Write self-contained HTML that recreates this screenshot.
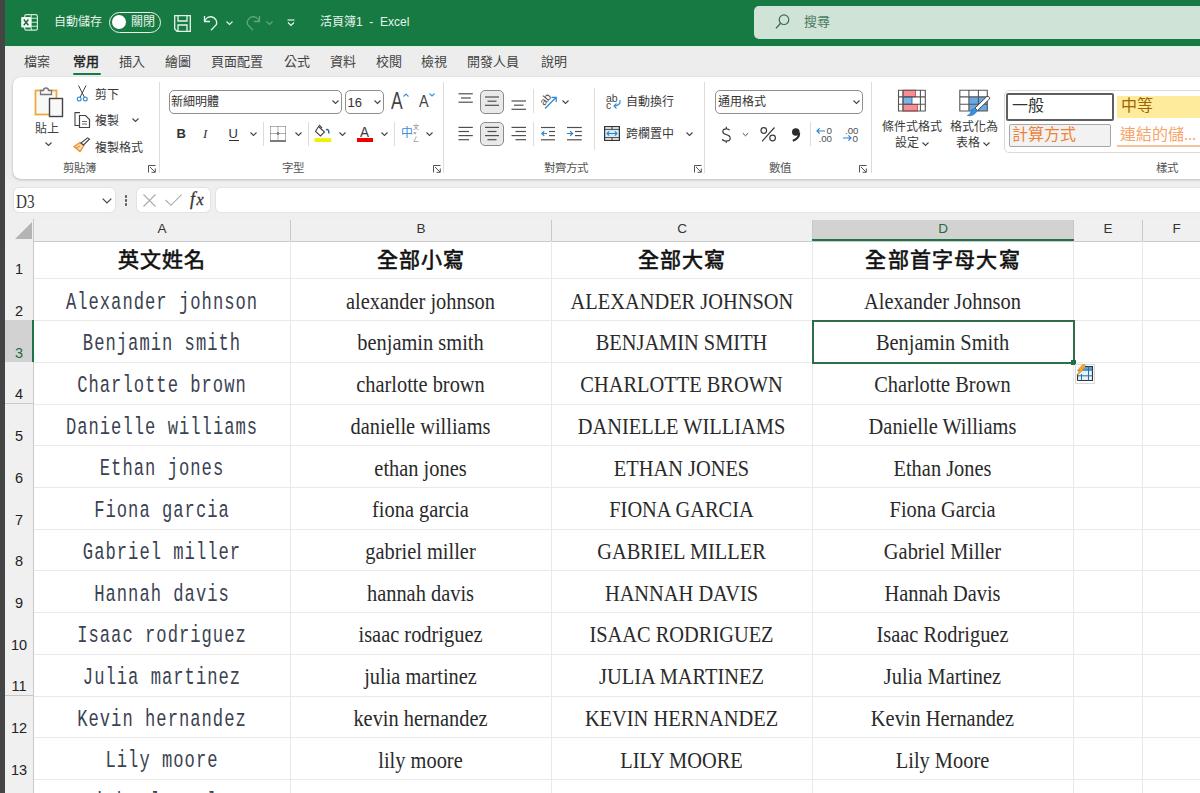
<!DOCTYPE html>
<html lang="zh-TW">
<head>
<meta charset="utf-8">
<style>
*{margin:0;padding:0;box-sizing:border-box}
html,body{width:1200px;height:793px;overflow:hidden}
body{position:relative;background:#efefef;font-family:"Liberation Sans",sans-serif;color:#262626}
.a{position:absolute;white-space:nowrap}
#strip{left:0;top:0;width:5px;height:793px;background:#444}
#title{left:5px;top:0;width:1195px;height:46.5px;background:#167a42}
#tabs{left:5px;top:46px;width:1195px;height:133px;background:#ededed;border-top:1.5px solid #ddf2e3}
#panel{left:13px;top:76.5px;width:1200px;height:102.5px;background:#fff;border-radius:8px;box-shadow:0 1px 3px rgba(0,0,0,.2),0 0 1px rgba(0,0,0,.12)}
.tab{font-size:13px;color:#444;top:52px;line-height:20px}
.lbl{font-size:11.5px;color:#555;line-height:14px}
.rt{font-size:12px;color:#3a3a3a;line-height:14px}
.sep{width:1px;background:#dcdcdc}
.chev{width:6px;height:6px}
svg{position:absolute;overflow:visible}
/* grid */
#fbar{left:5px;top:179px;width:1195px;height:41px;background:transparent}
.box{background:#fff;border-radius:5px;box-shadow:0 0 0 1px #e3e3e3}
#grid{left:5px;top:241px;width:1195px;height:552px;background:#fff}
.ch{top:219.5px;height:22.5px;background:#f0f0f0;border-right:1px solid #c8c8c8;border-bottom:1px solid #c8c8c8;font-size:13.5px;color:#333;text-align:center;line-height:17px}
.rh{left:5px;width:29px;background:#f0f0f0;border-right:1px solid #c8c8c8;border-bottom:1px solid #c8c8c8;font-size:14.5px;color:#222;text-align:center}
.hl{height:1px;background:#e9e9e9;left:33px;width:1167px}
.vl{width:1px;background:#e9e9e9;top:241px;height:552px}
.ca{font-family:"Liberation Mono",monospace;color:#3b4252;font-size:24.5px;line-height:24px}
.cs{font-family:"Liberation Serif",serif;color:#2a2a2a;font-size:24px;line-height:24px}
.hd{font-size:21px;font-weight:400;-webkit-text-stroke:0.6px #111;color:#111;text-align:center;line-height:24px;letter-spacing:1.2px;text-indent:1.2px}
.ca,.cs{height:0;overflow:visible}
.ca span,.cs span{position:absolute;left:0;right:0;bottom:0;display:block;text-align:center}
.ca span{transform:scaleX(0.7);bottom:-5px;letter-spacing:1.45px;text-indent:1.45px;left:-60px;right:-60px}
.cs span{transform:scaleX(0.85);bottom:-3.2px}
</style>
</head>
<body>
<div class="a" id="strip"></div>
<div class="a" id="title"></div>

<!-- title bar content -->
<svg style="left:0;top:0" width="1" height="1" viewBox="0 0 1 1">
 <rect x="24.7" y="14.6" width="12.7" height="15.6" rx="1.6" fill="none" stroke="#cdebd7" stroke-width="1.2"/>
 <path d="M31.2 14.6 V30.2 M24.7 18.2 H37.4 M24.7 22.3 H37.4 M24.7 26.2 H37.4" stroke="#cdebd7" stroke-width="1.1"/>
 <rect x="21.2" y="17.1" width="9.8" height="10.4" rx="0.8" fill="#f3fbf5"/>
 <path d="M23.8 19.6 L28.4 25.2 M28.4 19.6 L23.8 25.2" stroke="#1f6a3e" stroke-width="1.5"/>
</svg>
<div class="a" style="left:54px;top:14px;font-size:12px;line-height:16px;color:#e8f4ec">自動儲存</div>
<div class="a" style="left:108.5px;top:12px;width:52px;height:20.5px;border:1.4px solid #e8f4ec;border-radius:11px"></div>
<div class="a" style="left:112px;top:15px;width:14px;height:14px;border-radius:50%;background:#fff"></div>
<div class="a" style="left:131px;top:14px;font-size:12px;line-height:16px;color:#e8f4ec">關閉</div>
<svg style="left:174px;top:15px" width="17" height="17" viewBox="0 0 17 17">
 <path d="M0.7 0.7 H16.3 V16.3 H3 L0.7 14 Z" fill="none" stroke="#e8f4ec" stroke-width="1.3"/>
 <path d="M4 0.7 V6 H13 V0.7" fill="none" stroke="#e8f4ec" stroke-width="1.3"/>
 <path d="M4 16.3 V10 H13 V16.3" fill="none" stroke="#e8f4ec" stroke-width="1.3"/>
</svg>
<svg style="left:203px;top:15px" width="18" height="16" viewBox="0 0 18 16">
 <path d="M1.5 1 V6.5 H7" fill="none" stroke="#e8f4ec" stroke-width="1.3"/>
 <path d="M1.8 6.2 A6 6 0 1 1 13.5 9.5 L8 15.2" fill="none" stroke="#e8f4ec" stroke-width="1.3"/>
</svg>
<svg style="left:226px;top:21px" width="7" height="4" viewBox="0 0 7 4"><path d="M0.5 0.5 L3.5 3.5 L6.5 0.5" fill="none" stroke="#e8f4ec" stroke-width="1.2"/></svg>
<svg style="left:243px;top:15px" width="18" height="16" viewBox="0 0 18 16">
 <path d="M16.5 1 V6.5 H11" fill="none" stroke="#5fa77c" stroke-width="1.3"/>
 <path d="M16.2 6.2 A6 6 0 1 0 4.5 9.5 L10 15.2" fill="none" stroke="#5fa77c" stroke-width="1.3"/>
</svg>
<svg style="left:266px;top:21px" width="7" height="4" viewBox="0 0 7 4"><path d="M0.5 0.5 L3.5 3.5 L6.5 0.5" fill="none" stroke="#5fa77c" stroke-width="1.2"/></svg>
<svg style="left:287px;top:19px" width="8" height="8" viewBox="0 0 8 8">
 <line x1="0.5" y1="1" x2="7.5" y2="1" stroke="#e8f4ec" stroke-width="1.2"/>
 <path d="M1 3.5 L4 6.5 L7 3.5" fill="none" stroke="#e8f4ec" stroke-width="1.2"/>
</svg>
<div class="a" style="left:320px;top:14px;font-size:12px;line-height:16px;color:#e8f4ec">活頁簿1 &nbsp;- &nbsp;Excel</div>
<div class="a" style="left:754px;top:6px;width:460px;height:32.5px;background:#cfe3d6;border-radius:5px"></div>
<svg style="left:775px;top:14px" width="15" height="16" viewBox="0 0 15 16">
 <circle cx="9" cy="5.7" r="4.8" fill="none" stroke="#3c6b50" stroke-width="1.2"/>
 <line x1="5.6" y1="9.2" x2="1" y2="14.3" stroke="#3c6b50" stroke-width="1.3"/>
</svg>
<div class="a" style="left:804px;top:13px;font-size:13px;line-height:17px;color:#4a7a5e">搜尋</div>
<div class="a" id="tabs"></div>

<!-- tabs -->
<div class="a tab" style="left:24px">檔案</div>
<div class="a tab" style="left:73px;color:#222;-webkit-text-stroke:0.45px #222">常用</div>
<div class="a" style="left:73px;top:72.5px;width:28px;height:2.5px;border-radius:2px;background:#177a42"></div>
<div class="a tab" style="left:119px">插入</div>
<div class="a tab" style="left:165px">繪圖</div>
<div class="a tab" style="left:211px">頁面配置</div>
<div class="a tab" style="left:284px">公式</div>
<div class="a tab" style="left:330px">資料</div>
<div class="a tab" style="left:376px">校閱</div>
<div class="a tab" style="left:421px">檢視</div>
<div class="a tab" style="left:467px">開發人員</div>
<div class="a tab" style="left:541px">說明</div>
<div class="a" id="panel"></div>

<!-- ribbon: clipboard -->
<svg style="left:34px;top:85px" width="30" height="33" viewBox="0 0 30 33">
 <rect x="1.5" y="5.5" width="21" height="24" fill="#f8f8f8" stroke="#f0a93b" stroke-width="1.8"/>
 <path d="M6.5 9.5 V5.5 H9.5 A2.5 2.5 0 0 1 14.5 5.5 H17.5 V9.5 Z" fill="#f7f7f7" stroke="#777" stroke-width="1.3"/>
 <rect x="15.5" y="13.5" width="13" height="18" fill="#f8f8f8" stroke="#444" stroke-width="1.4"/>
</svg>
<div class="a rt" style="left:34.5px;top:121px;font-size:12px;line-height:16px;color:#444">貼上</div>
<svg style="left:45px;top:142px" width="7" height="4" viewBox="0 0 7 4"><path d="M0.5 0.5 L3.5 3.5 L6.5 0.5" fill="none" stroke="#444" stroke-width="1.1"/></svg>
<svg style="left:76px;top:85px" width="13" height="17" viewBox="0 0 13 17">
 <path d="M2.5 0.5 L8.5 12.5 M10 0.5 L4 12.5" stroke="#444" stroke-width="1"/>
 <circle cx="3.2" cy="14" r="1.9" fill="#fff" stroke="#3d8fd6" stroke-width="1.2"/>
 <circle cx="9.3" cy="14" r="1.9" fill="#fff" stroke="#3d8fd6" stroke-width="1.2"/>
</svg>
<div class="a rt" style="left:95px;top:87.5px">剪下</div>
<svg style="left:74px;top:112px" width="17" height="17" viewBox="0 0 17 17">
 <path d="M5 13.5 H1 V0.6 H6" fill="none" stroke="#444" stroke-width="1.1"/>
 <path d="M5.5 3.5 H11.5 L15.5 7.5 V15.5 H5.5 Z" fill="#fff" stroke="#444" stroke-width="1.2"/>
 <path d="M8 9.5 H13 M8 12 H13" stroke="#555" stroke-width="0.9"/>
</svg>
<div class="a rt" style="left:95px;top:114px">複製</div>
<svg style="left:132px;top:118px" width="7" height="4" viewBox="0 0 7 4"><path d="M0.5 0.5 L3.5 3.5 L6.5 0.5" fill="none" stroke="#444" stroke-width="1.1"/></svg>
<svg style="left:73px;top:137px" width="18" height="17" viewBox="0 0 18 17">
 <path d="M1 9.5 L7 14.5 L11 8.5 L7 5.5 Z" fill="#fbd9a4" stroke="#e8892c" stroke-width="1.2"/>
 <path d="M3 11 L7 9" stroke="#e8892c" stroke-width="1"/>
 <path d="M8 6 L10.5 8 L16.5 2 L14.5 0.8 Z" fill="#fff" stroke="#444" stroke-width="1.1"/>
</svg>
<div class="a rt" style="left:95px;top:140.5px">複製格式</div>
<div class="a lbl" style="left:62.5px;top:161px">剪貼簿</div>
<svg style="left:148px;top:165px" width="8" height="8" viewBox="0 0 8 8"><path d="M0.5 7.5 V0.5 H7.5 M2 2 L7 7 M3.5 7.3 H7.3 V3.5" fill="none" stroke="#555" stroke-width="1"/></svg>
<div class="a sep" style="left:159px;top:82px;height:91px"></div>

<!-- ribbon: font -->
<div class="a" style="left:168.5px;top:89.5px;width:173px;height:24px;border:1px solid #8f8f8f;border-radius:5px;background:#fff"></div>
<div class="a" style="left:171px;top:95px;font-size:12px;line-height:14px;color:#333">新細明體</div>
<svg style="left:332px;top:100px" width="7" height="4" viewBox="0 0 7 4"><path d="M0.5 0.5 L3.5 3.5 L6.5 0.5" fill="none" stroke="#444" stroke-width="1.1"/></svg>
<div class="a" style="left:345px;top:89.5px;width:38.5px;height:24px;border:1px solid #8f8f8f;border-radius:5px;background:#fff"></div>
<div class="a" style="left:347.5px;top:95px;font-size:13px;line-height:15px;color:#333">16</div>
<svg style="left:374px;top:100px" width="7" height="4" viewBox="0 0 7 4"><path d="M0.5 0.5 L3.5 3.5 L6.5 0.5" fill="none" stroke="#444" stroke-width="1.1"/></svg>
<div class="a" style="left:390.5px;top:88.5px;font-size:23px;line-height:24px;color:#444;transform:scaleX(0.76);transform-origin:0 0">A</div>
<svg style="left:403px;top:93px" width="6" height="4" viewBox="0 0 6 4"><path d="M0.5 3.5 L3 1 L5.5 3.5" fill="none" stroke="#3d8fd6" stroke-width="1.1"/></svg>
<div class="a" style="left:419px;top:93px;font-size:17px;line-height:18px;color:#444;transform:scaleX(0.85);transform-origin:0 0">A</div>
<svg style="left:429px;top:93px" width="6" height="4" viewBox="0 0 6 4"><path d="M0.5 0.5 L3 3 L5.5 0.5" fill="none" stroke="#3d8fd6" stroke-width="1.1"/></svg>
<div class="a" style="left:176.5px;top:126px;font-size:13px;line-height:15px;font-weight:bold;color:#333">B</div>
<div class="a" style="left:203px;top:126px;font-size:13px;line-height:15px;font-family:'Liberation Serif',serif;font-style:italic;color:#333">I</div>
<div class="a" style="left:228.5px;top:126px;font-size:13px;line-height:15px;color:#333">U</div>
<div class="a" style="left:228.5px;top:140px;width:10px;height:1px;background:#333"></div>
<svg style="left:249.5px;top:132px" width="7" height="4" viewBox="0 0 7 4"><path d="M0.5 0.5 L3.5 3.5 L6.5 0.5" fill="none" stroke="#444" stroke-width="1.1"/></svg>
<div class="a sep" style="left:263px;top:122px;height:24px"></div>
<svg style="left:270px;top:126px" width="16" height="16" viewBox="0 0 16 16">
 <path d="M0.5 0.5 H15.5 M0.5 0.5 V14.5 M15.5 0.5 V14.5 M8 0.5 V14.5 M0.5 7.5 H15.5" fill="none" stroke="#555" stroke-width="0.9" stroke-dasharray="1 1"/>
 <circle cx="8" cy="7.5" r="1" fill="none" stroke="#555" stroke-width="0.8"/>
 <line x1="0" y1="15" x2="16" y2="15" stroke="#333" stroke-width="1.3"/>
</svg>
<svg style="left:295px;top:132px" width="7" height="4" viewBox="0 0 7 4"><path d="M0.5 0.5 L3.5 3.5 L6.5 0.5" fill="none" stroke="#444" stroke-width="1.1"/></svg>
<div class="a sep" style="left:308px;top:122px;height:24px"></div>
<svg style="left:314px;top:124px" width="18" height="19" viewBox="0 0 18 19">
 <path d="M4.5 2.5 L10.5 8 L6.5 12 L1.5 7.5 Z" fill="#fff" stroke="#444" stroke-width="1.1"/>
 <path d="M5 1 L8 4" stroke="#444" stroke-width="1.1"/>
 <path d="M12 6 Q14 4.5 14.8 7.5 L14.8 9.5" fill="none" stroke="#1f5fa8" stroke-width="1.4"/>
 <rect x="0.5" y="14.2" width="16.8" height="3.8" fill="#f2f000"/>
</svg>
<svg style="left:339px;top:132px" width="7" height="4" viewBox="0 0 7 4"><path d="M0.5 0.5 L3.5 3.5 L6.5 0.5" fill="none" stroke="#444" stroke-width="1.1"/></svg>
<div class="a" style="left:359.5px;top:122.5px;font-size:15px;line-height:17px;color:#3a3a3a;transform:scaleX(0.9);transform-origin:0 0">A</div>
<div class="a" style="left:357px;top:138.2px;width:16px;height:3.8px;background:#ee0000"></div>
<svg style="left:381px;top:132px" width="7" height="4" viewBox="0 0 7 4"><path d="M0.5 0.5 L3.5 3.5 L6.5 0.5" fill="none" stroke="#444" stroke-width="1.1"/></svg>
<div class="a sep" style="left:394px;top:122px;height:24px"></div>
<div class="a" style="left:401px;top:126px;font-size:12px;line-height:14px;color:#3d8fd6">中</div>
<div class="a" style="left:413px;top:124px;font-size:6px;line-height:6px;color:#777">文<br>×<br>ㄥ</div>
<svg style="left:425.5px;top:132px" width="7" height="4" viewBox="0 0 7 4"><path d="M0.5 0.5 L3.5 3.5 L6.5 0.5" fill="none" stroke="#444" stroke-width="1.1"/></svg>
<div class="a lbl" style="left:282px;top:161px">字型</div>
<svg style="left:433px;top:165px" width="8" height="8" viewBox="0 0 8 8"><path d="M0.5 7.5 V0.5 H7.5 M2 2 L7 7 M3.5 7.3 H7.3 V3.5" fill="none" stroke="#555" stroke-width="1"/></svg>
<div class="a sep" style="left:443px;top:82px;height:91px"></div>

<!-- ribbon: alignment -->
<div class="a" style="left:480.2px;top:89.5px;width:23.8px;height:24px;border:1px solid #8a8a8a;border-radius:5px;background:#e9e9e9"></div>
<div class="a" style="left:480.2px;top:122px;width:23.8px;height:24.2px;border:1px solid #8a8a8a;border-radius:5px;background:#e9e9e9"></div>
<svg style="left:0;top:0" width="1" height="1" viewBox="0 0 1 1"><path d="M458.5 93.8 H472.8" stroke="#505050" stroke-width="1.2"/><path d="M461 98 H470.8" stroke="#505050" stroke-width="1.2"/><path d="M458.5 102.2 H472.8" stroke="#505050" stroke-width="1.2"/><path d="M485 97 H499" stroke="#505050" stroke-width="1.2"/><path d="M487.5 101.2 H496.5" stroke="#505050" stroke-width="1.2"/><path d="M485 105.3 H499" stroke="#505050" stroke-width="1.2"/><path d="M511.5 101 H526" stroke="#505050" stroke-width="1.2"/><path d="M514 105.2 H523.5" stroke="#505050" stroke-width="1.2"/><path d="M511.5 109.3 H526" stroke="#505050" stroke-width="1.2"/><path d="M458.5 127.4 H472.8" stroke="#505050" stroke-width="1.2"/><path d="M458.5 131.5 H469" stroke="#505050" stroke-width="1.2"/><path d="M458.5 135.6 H472.8" stroke="#505050" stroke-width="1.2"/><path d="M458.5 139.7 H469" stroke="#505050" stroke-width="1.2"/><path d="M485 127.4 H499" stroke="#505050" stroke-width="1.2"/><path d="M487.5 131.5 H496.5" stroke="#505050" stroke-width="1.2"/><path d="M485 135.6 H499" stroke="#505050" stroke-width="1.2"/><path d="M487.5 139.7 H496.5" stroke="#505050" stroke-width="1.2"/><path d="M511.5 127.4 H526" stroke="#505050" stroke-width="1.2"/><path d="M515.5 131.5 H526" stroke="#505050" stroke-width="1.2"/><path d="M511.5 135.6 H526" stroke="#505050" stroke-width="1.2"/><path d="M515.5 139.7 H526" stroke="#505050" stroke-width="1.2"/><path d="M541 127.5 H555" stroke="#505050" stroke-width="1.2"/><path d="M549 131.5 H555" stroke="#505050" stroke-width="1.2"/><path d="M549 135.6 H555" stroke="#505050" stroke-width="1.2"/><path d="M541 139.8 H555" stroke="#505050" stroke-width="1.2"/><path d="M567 127.5 H581.8" stroke="#505050" stroke-width="1.2"/><path d="M575 131.5 H581.8" stroke="#505050" stroke-width="1.2"/><path d="M575 135.6 H581.8" stroke="#505050" stroke-width="1.2"/><path d="M567 139.8 H581.8" stroke="#505050" stroke-width="1.2"/><path d="M547 133.5 H541.8 M544.2 131.2 L541.8 133.5 L544.2 135.8" fill="none" stroke="#2f86d0" stroke-width="1.2"/><path d="M567 133.5 H572.6 M570.2 131.2 L572.6 133.5 L570.2 135.8" fill="none" stroke="#2f86d0" stroke-width="1.2"/><path d="M545 108.5 L556 97.5 M551.5 97.3 H556.2 V102" fill="none" stroke="#2f86d0" stroke-width="1.2"/></svg>
<div class="a" style="left:537px;top:93px;font-size:10.5px;line-height:12px;color:#444;transform:rotate(-50deg);transform-origin:50% 50%;width:16px;text-align:center">ab</div>
<div class="a sep" style="left:533px;top:89px;height:24px"></div>
<svg style="left:562px;top:100px" width="7" height="4" viewBox="0 0 7 4"><path d="M0.5 0.5 L3.5 3.5 L6.5 0.5" fill="none" stroke="#444" stroke-width="1.1"/></svg>
<div class="a sep" style="left:533px;top:122px;height:24px"></div>
<div class="a sep" style="left:593.5px;top:88px;height:62px"></div>
<svg style="left:605px;top:92px" width="18" height="18" viewBox="0 0 18 18">
 <text x="1" y="9.5" font-size="10.5" fill="#444" font-family="Liberation Sans">ab</text>
 <text x="1" y="16.5" font-size="10.5" fill="#444" font-family="Liberation Sans">c</text>
 <path d="M15 8 Q16 13 9.5 14 M11.5 11.5 L9 14 L11.5 16.5" fill="none" stroke="#3d8fd6" stroke-width="1.2"/>
</svg>
<div class="a rt" style="left:625.5px;top:95px">自動換行</div>
<svg style="left:604px;top:126px" width="16" height="15" viewBox="0 0 16 15">
 <rect x="1" y="3.5" width="14" height="8" fill="#d3ecfb"/>
 <rect x="0.6" y="0.6" width="14.8" height="13.8" fill="none" stroke="#333" stroke-width="1.2"/>
 <path d="M0.6 3.3 H15.4 M0.6 11.7 H15.4 M8 0.6 V3.3 M8 11.7 V14.4" stroke="#333" stroke-width="1"/>
 <path d="M3 7.5 H13 M5.2 5.3 L3 7.5 L5.2 9.7 M10.8 5.3 L13 7.5 L10.8 9.7" fill="none" stroke="#2f7fc1" stroke-width="1.1"/>
</svg>
<div class="a rt" style="left:625.5px;top:127px">跨欄置中</div>
<svg style="left:685.5px;top:132px" width="7" height="4" viewBox="0 0 7 4"><path d="M0.5 0.5 L3.5 3.5 L6.5 0.5" fill="none" stroke="#444" stroke-width="1.1"/></svg>
<div class="a lbl" style="left:544px;top:161px">對齊方式</div>
<svg style="left:694px;top:165px" width="8" height="8" viewBox="0 0 8 8"><path d="M0.5 7.5 V0.5 H7.5 M2 2 L7 7 M3.5 7.3 H7.3 V3.5" fill="none" stroke="#555" stroke-width="1"/></svg>
<div class="a sep" style="left:703.5px;top:82px;height:91px"></div>

<!-- ribbon: number -->
<div class="a" style="left:715px;top:89.5px;width:147.5px;height:24px;border:1px solid #8f8f8f;border-radius:5px;background:#fff"></div>
<div class="a" style="left:718px;top:95px;font-size:12px;line-height:14px;color:#333">通用格式</div>
<svg style="left:852.5px;top:100px" width="7" height="4" viewBox="0 0 7 4"><path d="M0.5 0.5 L3.5 3.5 L6.5 0.5" fill="none" stroke="#444" stroke-width="1.1"/></svg>
<svg style="left:0;top:0" width="1" height="1" viewBox="0 0 1 1">
 <path d="M729.6 130.2 Q729 128.8 726.3 128.8 Q722.8 128.8 722.8 131.6 Q722.8 133.8 726.3 134.7 Q730.2 135.6 730.2 138.2 Q730.2 141 726.3 141 Q723 141 722.3 139.2 M726.3 126.8 V128.8 M726.3 141 V143" fill="none" stroke="#3c3c3c" stroke-width="1.2"/>
 <path d="M742.8 133.2 L745.5 135.8 L748.2 133.2" fill="none" stroke="#444" stroke-width="1"/>
 <circle cx="763.8" cy="130.5" r="2.8" fill="none" stroke="#3c3c3c" stroke-width="1.2"/>
 <circle cx="772.6" cy="138" r="2.8" fill="none" stroke="#3c3c3c" stroke-width="1.2"/>
 <path d="M774.5 127.5 L762 141.3" stroke="#3c3c3c" stroke-width="1.2"/>
 <circle cx="795.8" cy="132" r="3.8" fill="#2b2b2b"/>
 <path d="M799.2 132.8 Q799.4 138.6 792.8 140.8" fill="none" stroke="#2b2b2b" stroke-width="2"/>
 <path d="M825 131 H817 M819.6 128.4 L817 131 L819.6 133.6" fill="none" stroke="#2f86d0" stroke-width="1.2"/>
 <text x="826.5" y="133.8" font-size="9.2" fill="#505050" font-family="Liberation Sans" textLength="5.5" lengthAdjust="spacingAndGlyphs">0</text>
 <text x="818.5" y="141.5" font-size="9.2" fill="#505050" font-family="Liberation Sans" textLength="13.5" lengthAdjust="spacingAndGlyphs">.00</text>
 <text x="845" y="133.8" font-size="9.2" fill="#505050" font-family="Liberation Sans" textLength="13.5" lengthAdjust="spacingAndGlyphs">.00</text>
 <path d="M843 138 H851 M848.4 135.4 L851 138 L848.4 140.6" fill="none" stroke="#2f86d0" stroke-width="1.2"/>
 <text x="852.5" y="141.5" font-size="9.2" fill="#505050" font-family="Liberation Sans" textLength="5.5" lengthAdjust="spacingAndGlyphs">0</text>
</svg>
<div class="a sep" style="left:809.5px;top:122px;height:24px"></div>
<div class="a lbl" style="left:768.5px;top:161px">數值</div>
<svg style="left:859px;top:165px" width="8" height="8" viewBox="0 0 8 8"><path d="M0.5 7.5 V0.5 H7.5 M2 2 L7 7 M3.5 7.3 H7.3 V3.5" fill="none" stroke="#555" stroke-width="1"/></svg>
<div class="a sep" style="left:870.5px;top:82px;height:91px"></div>
<!-- ribbon: styles -->
<svg style="left:0;top:0" width="1" height="1" viewBox="0 0 1 1">
 <rect x="898.5" y="90.2" width="26.8" height="20.8" fill="#fff"/>
 <rect x="903.2" y="90.2" width="12.4" height="6.6" fill="#f98d93" stroke="#c94a4e" stroke-width="0.9"/>
 <rect x="903.2" y="104.4" width="14.2" height="6.6" fill="#f98d93" stroke="#c94a4e" stroke-width="0.9"/>
 <rect x="903.2" y="97" width="8.8" height="7.2" fill="#7db3e6" stroke="#2d6bb0" stroke-width="0.9"/>
 <path d="M898.5 90.2 H925.3 V111 H898.5 Z M898.5 96.9 H925.3 M898.5 104.2 H925.3 M902.9 90.2 V111 M920.4 90.2 V111" fill="none" stroke="#555" stroke-width="1.1"/>
 <rect x="959.8" y="90.2" width="27.5" height="20.8" fill="#fff"/>
 <rect x="968.9" y="96.9" width="18.4" height="14.1" fill="#6aa9e3"/>
 <path d="M959.8 90.2 H987.3 V111 H959.8 Z M959.8 96.9 H987.3 M959.8 104.2 H987.3 M968.9 90.2 V111 M978.4 90.2 V111" fill="none" stroke="#555" stroke-width="1.1"/>
 <path d="M988.2 96.3 Q990.5 97.5 989.5 99 L977.5 110.5 L975 108 L986.5 96.8 Z" fill="#fff" stroke="#444" stroke-width="1"/>
 <path d="M975.3 108.2 Q971.5 108.5 970.8 112 Q970 114.8 967.3 115.5 Q973.5 117 977.3 110.8 Z" fill="#3f8fd8" stroke="#2a6fb5" stroke-width="0.6"/>
</svg>
<div class="a rt" style="left:882px;top:120px">條件式格式</div>
<div class="a rt" style="left:895px;top:136px">設定</div>
<svg style="left:921.5px;top:142px" width="7" height="4" viewBox="0 0 7 4"><path d="M0.5 0.5 L3.5 3.5 L6.5 0.5" fill="none" stroke="#444" stroke-width="1.1"/></svg>

<div class="a rt" style="left:950px;top:120px">格式化為</div>
<div class="a rt" style="left:956px;top:136px">表格</div>
<svg style="left:982.5px;top:142px" width="7" height="4" viewBox="0 0 7 4"><path d="M0.5 0.5 L3.5 3.5 L6.5 0.5" fill="none" stroke="#444" stroke-width="1.1"/></svg>
<div class="a" style="left:1004px;top:90px;width:220px;height:62.5px;border:1px solid #dadada;border-radius:5px;background:#fff"></div>
<div class="a" style="left:1006px;top:93px;width:107.5px;height:27.5px;border:2px solid #5f5f5f;border-radius:2px;background:#fff"></div>
<div class="a" style="left:1011.5px;top:96px;font-size:16px;line-height:20px;color:#333;font-family:'Liberation Serif',serif">一般</div>
<div class="a" style="left:1116.5px;top:95.5px;width:100px;height:22.5px;background:#ffeb9c"></div>
<div class="a" style="left:1121px;top:96px;font-size:16px;line-height:20px;color:#9c6500;font-family:'Liberation Serif',serif">中等</div>
<div class="a" style="left:1008.5px;top:124px;width:102.5px;height:22.5px;border:1px solid #a6a6a6;border-radius:2px;background:#f2f2f2"></div>
<div class="a" style="left:1011.5px;top:125px;font-size:16px;line-height:20px;color:#ee8237;font-family:'Liberation Serif',serif">計算方式</div>
<div class="a" style="left:1120px;top:125px;font-size:16px;line-height:20px;color:#f5a66c;font-family:'Liberation Serif',serif">連結的儲...</div>
<div class="a" style="left:1116.5px;top:145px;width:100px;height:2px;background:#f7c29b"></div>
<div class="a lbl" style="left:1156px;top:161px">樣式</div>
<div class="a" id="fbar"></div>

<!-- formula bar -->
<div class="a box" style="left:14px;top:188px;width:101px;height:24px"></div>
<div class="a" style="left:16px;top:191px;font-family:'Liberation Serif',serif;font-size:19px;line-height:22px;color:#333;transform:scaleX(0.8);transform-origin:0 0">D3</div>
<svg style="left:102px;top:197.5px" width="10" height="6" viewBox="0 0 10 6"><path d="M0.7 0.7 L5 5 L9.3 0.7" fill="none" stroke="#444" stroke-width="1.2"/></svg>
<div class="a" style="left:124.5px;top:195px;width:2.5px;height:2.5px;background:#555;border-radius:50%"></div>
<div class="a" style="left:124.5px;top:199px;width:2.5px;height:2.5px;background:#555;border-radius:50%"></div>
<div class="a" style="left:124.5px;top:203px;width:2.5px;height:2.5px;background:#555;border-radius:50%"></div>
<div class="a box" style="left:137px;top:188px;width:73px;height:24px"></div>
<svg style="left:143px;top:194px" width="13" height="13" viewBox="0 0 13 13"><path d="M0.5 0.5 L12.5 12.5 M12.5 0.5 L0.5 12.5" stroke="#aaa" stroke-width="1.1"/></svg>
<svg style="left:165px;top:194px" width="17" height="12" viewBox="0 0 17 12"><path d="M0.5 6 L6 11.3 L16.5 0.7" fill="none" stroke="#aaa" stroke-width="1.1"/></svg>
<div class="a" style="left:190px;top:188px;font-family:'Liberation Serif',serif;font-style:italic;font-size:18px;line-height:22px;color:#333;-webkit-text-stroke:0.3px #333">f<span style="font-size:16px;margin-left:1.5px">x</span></div>
<div class="a box" style="left:215.5px;top:188px;width:1000px;height:24px"></div>
<div class="a" id="grid"></div>
<!-- grid -->
<div class="a" style="left:5px;top:219px;width:29px;height:23px;background:#efefef;border-right:1px solid #c8c8c8"></div>
<svg style="left:15px;top:222px" width="17" height="17" viewBox="0 0 17 17"><path d="M17 0 V17 H0 Z" fill="#b4b4b4"/></svg>
<div class="a ch" style="left:34px;width:257px;background:#f0f0f0;color:#333">A</div>
<div class="a ch" style="left:291px;width:261px;background:#f0f0f0;color:#333">B</div>
<div class="a ch" style="left:552px;width:261px;background:#f0f0f0;color:#333">C</div>
<div class="a ch" style="left:813px;width:261px;background:#d2d2d2;color:#1e6b3c">D</div>
<div class="a ch" style="left:1074px;width:69px;background:#f0f0f0;color:#333">E</div>
<div class="a ch" style="left:1143px;width:68px;background:#f0f0f0;color:#333">F</div>
<div class="a" style="left:812px;top:239px;width:262px;height:2px;background:#217346"></div>
<div class="a rh" style="top:241.3px;height:38.0px;background:#f0f0f0;color:#222"><span style="position:absolute;left:0;right:0;bottom:2px;line-height:14px">1</span></div>
<div class="a hl" style="top:278.3px"></div>
<div class="a rh" style="top:278.3px;height:42.7px;background:#f0f0f0;color:#222"><span style="position:absolute;left:0;right:0;bottom:2px;line-height:14px">2</span></div>
<div class="a hl" style="top:320.0px"></div>
<div class="a rh" style="top:320.0px;height:42.7px;background:#d2d2d2;color:#1e6b3c"><span style="position:absolute;left:0;right:0;bottom:2px;line-height:14px">3</span></div>
<div class="a hl" style="top:361.7px"></div>
<div class="a rh" style="top:361.7px;height:42.7px;background:#f0f0f0;color:#222"><span style="position:absolute;left:0;right:0;bottom:2px;line-height:14px">4</span></div>
<div class="a hl" style="top:403.5px"></div>
<div class="a rh" style="top:403.5px;height:42.7px;background:#f0f0f0;color:#222"><span style="position:absolute;left:0;right:0;bottom:2px;line-height:14px">5</span></div>
<div class="a hl" style="top:445.2px"></div>
<div class="a rh" style="top:445.2px;height:42.7px;background:#f0f0f0;color:#222"><span style="position:absolute;left:0;right:0;bottom:2px;line-height:14px">6</span></div>
<div class="a hl" style="top:486.9px"></div>
<div class="a rh" style="top:486.9px;height:42.7px;background:#f0f0f0;color:#222"><span style="position:absolute;left:0;right:0;bottom:2px;line-height:14px">7</span></div>
<div class="a hl" style="top:528.6px"></div>
<div class="a rh" style="top:528.6px;height:42.7px;background:#f0f0f0;color:#222"><span style="position:absolute;left:0;right:0;bottom:2px;line-height:14px">8</span></div>
<div class="a hl" style="top:570.3px"></div>
<div class="a rh" style="top:570.3px;height:42.7px;background:#f0f0f0;color:#222"><span style="position:absolute;left:0;right:0;bottom:2px;line-height:14px">9</span></div>
<div class="a hl" style="top:612.1px"></div>
<div class="a rh" style="top:612.1px;height:42.7px;background:#f0f0f0;color:#222"><span style="position:absolute;left:0;right:0;bottom:2px;line-height:14px">10</span></div>
<div class="a hl" style="top:653.8px"></div>
<div class="a rh" style="top:653.8px;height:42.7px;background:#f0f0f0;color:#222"><span style="position:absolute;left:0;right:0;bottom:2px;line-height:14px">11</span></div>
<div class="a hl" style="top:695.5px"></div>
<div class="a rh" style="top:695.5px;height:42.7px;background:#f0f0f0;color:#222"><span style="position:absolute;left:0;right:0;bottom:2px;line-height:14px">12</span></div>
<div class="a hl" style="top:737.2px"></div>
<div class="a rh" style="top:737.2px;height:42.7px;background:#f0f0f0;color:#222"><span style="position:absolute;left:0;right:0;bottom:2px;line-height:14px">13</span></div>
<div class="a hl" style="top:778.9px"></div>
<div class="a rh" style="top:778.9px;height:42.7px;background:#f0f0f0;color:#222"><span style="position:absolute;left:0;right:0;bottom:2px;line-height:14px">14</span></div>
<div class="a hl" style="top:820.7px"></div>
<div class="a vl" style="left:290px"></div>
<div class="a vl" style="left:551px"></div>
<div class="a vl" style="left:812px"></div>
<div class="a vl" style="left:1073px"></div>
<div class="a vl" style="left:1142px"></div>
<div class="a" style="left:32px;top:320px;width:2px;height:42px;background:#217346"></div>


<!-- cells -->
<div class="a hd" style="left:33px;width:257px;top:247.5px">英文姓名</div>
<div class="a hd" style="left:290px;width:261px;top:247.5px">全部小寫</div>
<div class="a hd" style="left:551px;width:261px;top:247.5px">全部大寫</div>
<div class="a hd" style="left:812px;width:261px;top:247.5px">全部首字母大寫</div>
<div class="a ca" style="left:33px;width:257px;top:309.5px"><span>Alexander johnson</span></div>
<div class="a cs" style="left:290px;width:261px;top:309.5px"><span>alexander johnson</span></div>
<div class="a cs" style="left:551px;width:261px;top:309.5px"><span>ALEXANDER JOHNSON</span></div>
<div class="a cs" style="left:812px;width:261px;top:309.5px"><span>Alexander Johnson</span></div>
<div class="a ca" style="left:33px;width:257px;top:351.2px"><span>Benjamin smith</span></div>
<div class="a cs" style="left:290px;width:261px;top:351.2px"><span>benjamin smith</span></div>
<div class="a cs" style="left:551px;width:261px;top:351.2px"><span>BENJAMIN SMITH</span></div>
<div class="a cs" style="left:812px;width:261px;top:351.2px"><span>Benjamin Smith</span></div>
<div class="a ca" style="left:33px;width:257px;top:392.9px"><span>Charlotte brown</span></div>
<div class="a cs" style="left:290px;width:261px;top:392.9px"><span>charlotte brown</span></div>
<div class="a cs" style="left:551px;width:261px;top:392.9px"><span>CHARLOTTE BROWN</span></div>
<div class="a cs" style="left:812px;width:261px;top:392.9px"><span>Charlotte Brown</span></div>
<div class="a ca" style="left:33px;width:257px;top:434.7px"><span>Danielle williams</span></div>
<div class="a cs" style="left:290px;width:261px;top:434.7px"><span>danielle williams</span></div>
<div class="a cs" style="left:551px;width:261px;top:434.7px"><span>DANIELLE WILLIAMS</span></div>
<div class="a cs" style="left:812px;width:261px;top:434.7px"><span>Danielle Williams</span></div>
<div class="a ca" style="left:33px;width:257px;top:476.4px"><span>Ethan jones</span></div>
<div class="a cs" style="left:290px;width:261px;top:476.4px"><span>ethan jones</span></div>
<div class="a cs" style="left:551px;width:261px;top:476.4px"><span>ETHAN JONES</span></div>
<div class="a cs" style="left:812px;width:261px;top:476.4px"><span>Ethan Jones</span></div>
<div class="a ca" style="left:33px;width:257px;top:518.1px"><span>Fiona garcia</span></div>
<div class="a cs" style="left:290px;width:261px;top:518.1px"><span>fiona garcia</span></div>
<div class="a cs" style="left:551px;width:261px;top:518.1px"><span>FIONA GARCIA</span></div>
<div class="a cs" style="left:812px;width:261px;top:518.1px"><span>Fiona Garcia</span></div>
<div class="a ca" style="left:33px;width:257px;top:559.8px"><span>Gabriel miller</span></div>
<div class="a cs" style="left:290px;width:261px;top:559.8px"><span>gabriel miller</span></div>
<div class="a cs" style="left:551px;width:261px;top:559.8px"><span>GABRIEL MILLER</span></div>
<div class="a cs" style="left:812px;width:261px;top:559.8px"><span>Gabriel Miller</span></div>
<div class="a ca" style="left:33px;width:257px;top:601.5px"><span>Hannah davis</span></div>
<div class="a cs" style="left:290px;width:261px;top:601.5px"><span>hannah davis</span></div>
<div class="a cs" style="left:551px;width:261px;top:601.5px"><span>HANNAH DAVIS</span></div>
<div class="a cs" style="left:812px;width:261px;top:601.5px"><span>Hannah Davis</span></div>
<div class="a ca" style="left:33px;width:257px;top:643.3px"><span>Isaac rodriguez</span></div>
<div class="a cs" style="left:290px;width:261px;top:643.3px"><span>isaac rodriguez</span></div>
<div class="a cs" style="left:551px;width:261px;top:643.3px"><span>ISAAC RODRIGUEZ</span></div>
<div class="a cs" style="left:812px;width:261px;top:643.3px"><span>Isaac Rodriguez</span></div>
<div class="a ca" style="left:33px;width:257px;top:685.0px"><span>Julia martinez</span></div>
<div class="a cs" style="left:290px;width:261px;top:685.0px"><span>julia martinez</span></div>
<div class="a cs" style="left:551px;width:261px;top:685.0px"><span>JULIA MARTINEZ</span></div>
<div class="a cs" style="left:812px;width:261px;top:685.0px"><span>Julia Martinez</span></div>
<div class="a ca" style="left:33px;width:257px;top:726.7px"><span>Kevin hernandez</span></div>
<div class="a cs" style="left:290px;width:261px;top:726.7px"><span>kevin hernandez</span></div>
<div class="a cs" style="left:551px;width:261px;top:726.7px"><span>KEVIN HERNANDEZ</span></div>
<div class="a cs" style="left:812px;width:261px;top:726.7px"><span>Kevin Hernandez</span></div>
<div class="a ca" style="left:33px;width:257px;top:768.4px"><span>Lily moore</span></div>
<div class="a cs" style="left:290px;width:261px;top:768.4px"><span>lily moore</span></div>
<div class="a cs" style="left:551px;width:261px;top:768.4px"><span>LILY MOORE</span></div>
<div class="a cs" style="left:812px;width:261px;top:768.4px"><span>Lily Moore</span></div>
<div class="a ca" style="left:33px;width:257px;top:810.1px"><span>Michael taylor</span></div>
<div class="a cs" style="left:290px;width:261px;top:810.1px"><span>michael taylor</span></div>
<div class="a cs" style="left:551px;width:261px;top:810.1px"><span>MICHAEL TAYLOR</span></div>
<div class="a cs" style="left:812px;width:261px;top:810.1px"><span>Michael Taylor</span></div>
<div class="a" style="left:811.5px;top:319.5px;width:263.5px;height:44px;border:2px solid #2d6e48"></div>
<div class="a" style="left:1070.5px;top:359.5px;width:5px;height:5px;background:#1f6f42"></div>
<div class="a" style="left:1075px;top:363.5px;width:20px;height:20px;border:1px solid #d9d9d9;background:#fff"></div>
<svg style="left:1076px;top:364px" width="18" height="18" viewBox="0 0 18 18">
 <rect x="1.5" y="2.5" width="15" height="14" fill="#e3f2fc"/>
 <path d="M9 3 H16.5 V6 H5 Z" fill="#5aa0dc"/>
 <path d="M1.5 16.5 H16.5 V2.5 H9 M1.5 16.5 V10" fill="none" stroke="#333" stroke-width="1.1"/>
 <path d="M5.5 10 V16.5 M12.5 2.5 V16.5 M1.5 6.2 H16.5 M1.5 11.8 H16.5" stroke="#2e6da4" stroke-width="1"/>
 <path d="M6.5 0.5 L9.5 0.8 L6.5 5.5 L7.8 5.5 L1.5 11 L3.5 6 L2.3 6 Z" fill="#f5a623" stroke="#e07b12" stroke-width="0.5"/>
</svg>
</body>
</html>
